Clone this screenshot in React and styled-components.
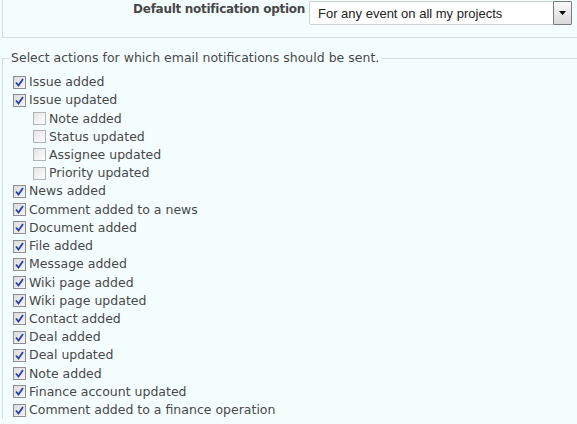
import React from "react";
import styled, { createGlobalStyle } from "styled-components";

const Global = createGlobalStyle`
  html, body { margin: 0; padding: 0; background: #f5feff; }
  body { font-family: Verdana, "DejaVu Sans", sans-serif; font-size: 12.5px; color: #484848; overflow: hidden; }
`;

const Page = styled.div`
  width: 577px;
  height: 424px;
  overflow: hidden;
  background: #f5feff;
`;

const TopBox = styled.div`
  margin: -1px 0 0 2px;
  width: 620px;
  height: 37px;
  border: 1px solid #dcdfe0;
  display: grid;
  grid-template-columns: 302px 1fr;
  column-gap: 4px;
  align-items: start;
`;

const OptLabel = styled.label`
  font-weight: bold;
  font-size: 12px;
  letter-spacing: -0.28px;
  text-align: right;
  padding-top: 1px;
  line-height: 16px;
  color: #484848;
`;

const SelectBox = styled.div`
  margin-top: 1px;
  width: 263px;
  height: 24px;
  border: 1px solid #cfd2d3;
  border-radius: 2px;
  background: #fff;
  display: flex;
  align-items: center;
  justify-content: space-between;
  font-family: "Liberation Sans", Arial, sans-serif;
  font-size: 13px;
  color: #222;
  padding-left: 8px;
  box-sizing: border-box;
`;

const ArrowBtn = styled.div`
  width: 19px;
  height: 24px;
  margin-right: -1px;
  margin-top: -1px;
  box-sizing: border-box;
  border: 1px solid #7a7a7a;
  border-radius: 1px;
  background: linear-gradient(#fbfbfb, #d9d9d9);
  display: flex;
  align-items: center;
  justify-content: center;
`;

const Fieldset = styled.fieldset`
  margin: 13px 0 0 2px;
  padding: 8px 0 0 10px;
  border: 1px solid #dcdfe0;
  border-right: none;
  border-bottom: none;
  min-width: 0;
`;

const Legend = styled.legend`
  padding: 0 2px 0 1px;
  margin-left: -3px;
  line-height: 14px;
`;

const Row = styled.label`
  display: flex;
  align-items: center;
  height: 18.22px;
  padding-left: ${(p) => (p.$indent ? "20px" : "0")};
  gap: 3px;
`;

const Box = styled.span`
  width: 13px;
  height: 13px;
  box-sizing: border-box;
  border: 1px solid ${(p) => (p.$checked ? "#8f8f8f" : "#b3b3b3")};
  background: ${(p) =>
    p.$checked
      ? "linear-gradient(135deg, #dcdcdc, #f4f4f4)"
      : "linear-gradient(135deg, #e4e4e4, #ffffff)"};
  display: flex;
  align-items: center;
  justify-content: center;
  flex: none;
`;

const Text = styled.span`
  white-space: nowrap;
  line-height: 14px;
`;

const Check = () => (
  <svg width="9" height="9" viewBox="0 0 9 9">
    <path d="M1 4.5 L3.5 7.5 L8 1" fill="none" stroke="#2a3fae" strokeWidth="1.8" />
  </svg>
);

const items = [
  ["Issue added", true, false],
  ["Issue updated", true, false],
  ["Note added", false, true],
  ["Status updated", false, true],
  ["Assignee updated", false, true],
  ["Priority updated", false, true],
  ["News added", true, false],
  ["Comment added to a news", true, false],
  ["Document added", true, false],
  ["File added", true, false],
  ["Message added", true, false],
  ["Wiki page added", true, false],
  ["Wiki page updated", true, false],
  ["Contact added", true, false],
  ["Deal added", true, false],
  ["Deal updated", true, false],
  ["Note added", true, false],
  ["Finance account updated", true, false],
  ["Comment added to a finance operation", true, false],
];

export default function App() {
  return (
    <Page>
      <Global />
      <TopBox>
        <OptLabel>Default notification option</OptLabel>
        <SelectBox>
          <span>For any event on all my projects</span>
          <ArrowBtn>
            <svg width="7" height="4" viewBox="0 0 7 4">
              <path d="M0 0 H7 L3.5 4 Z" fill="#000" />
            </svg>
          </ArrowBtn>
        </SelectBox>
      </TopBox>
      <Fieldset>
        <Legend>Select actions for which email notifications should be sent.</Legend>
        {items.map(([label, checked, indent], i) => (
          <Row key={i} $indent={indent}>
            <Box $checked={checked}>{checked && <Check />}</Box>
            <Text>{label}</Text>
          </Row>
        ))}
      </Fieldset>
    </Page>
  );
}
